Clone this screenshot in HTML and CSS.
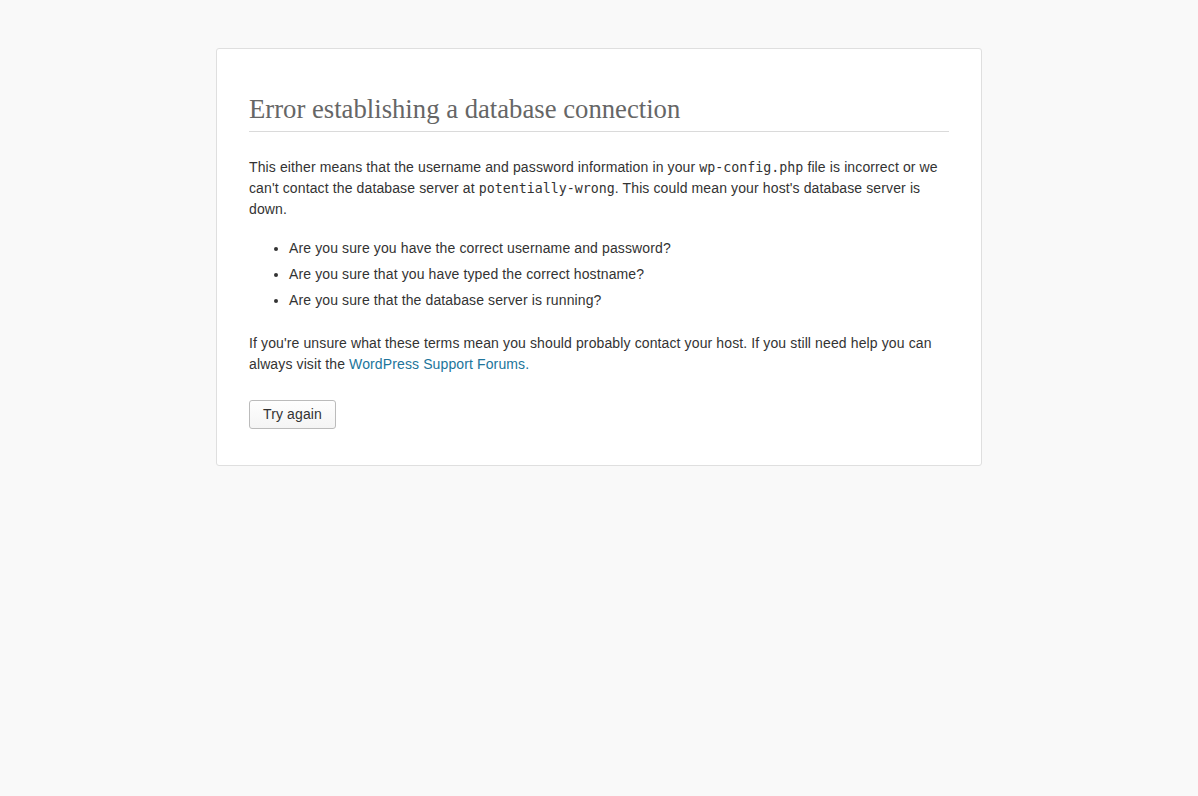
FILE: index.html
```html
<!DOCTYPE html>
<html lang="en-US">
<head>
<meta charset="utf-8">
<title>Database Error</title>
<link rel="stylesheet" href="styles.css">
</head>
<body class="error-page">
<h1 class="error-title">Error establishing a database connection</h1>
<p class="message">This either means that the username and password information in your <code class="code">wp-config.php</code> file is incorrect or we can't contact the database server at <code class="code">potentially-wrong</code>. This could mean your host's database server is down.</p>
<ul class="checks">
<li class="check">Are you sure you have the correct username and password?</li>
<li class="check">Are you sure that you have typed the correct hostname?</li>
<li class="check">Are you sure that the database server is running?</li>
</ul>
<p class="message">If you're unsure what these terms mean you should probably contact your host. If you still need help you can always visit the <a class="link" href="#">WordPress Support Forums.</a></p>
<p class="message action"><a class="button" href="#">Try again</a></p>
</body>
</html>
```
FILE: styles.css
```css
html {
  background: #f9f9f9;
}
.error-page {
  background: #fff;
  color: #333;
  font-family: "Liberation Sans", Arial, sans-serif;
  font-size: 14px;
  letter-spacing: 0.12px;
  margin: 48px auto 0;
  padding: 16px 32px;
  max-width: 700px;
  border: 1px solid #dfdfdf;
  border-radius: 3px;
}
.error-title {
  border-bottom: 1px solid #dadada;
  color: #666;
  font-family: Georgia, "Liberation Serif", serif;
  font-size: 26.7px;
  letter-spacing: 0;
  font-weight: normal;
  margin: 30px 0 0;
  padding: 0 0 7px;
  line-height: 29px;
}
.message {
  font-size: 14px;
  line-height: 1.5;
  margin: 25px 0 20px;
}
.code {
  font-family: "DejaVu Sans Mono", Consolas, monospace;
  font-size: 13.3px;
  letter-spacing: 0;
}
.checks {
  margin: 16px 0;
  padding-left: 40px;
}
.check {
  margin-bottom: 10px;
  font-size: 14px;
  line-height: 16px;
}
.link {
  color: #21759b;
  text-decoration: none;
}
.action {
  line-height: 29px;
}
.button {
  display: inline-block;
  box-sizing: border-box;
  height: 29px;
  line-height: 27px;
  padding: 0 13px;
  font-size: 14px;
  color: #333;
  text-decoration: none;
  border: 1px solid #bbb;
  border-radius: 3px;
  background: linear-gradient(to bottom, #fefefe, #f4f4f4);
  vertical-align: top;
}
```
